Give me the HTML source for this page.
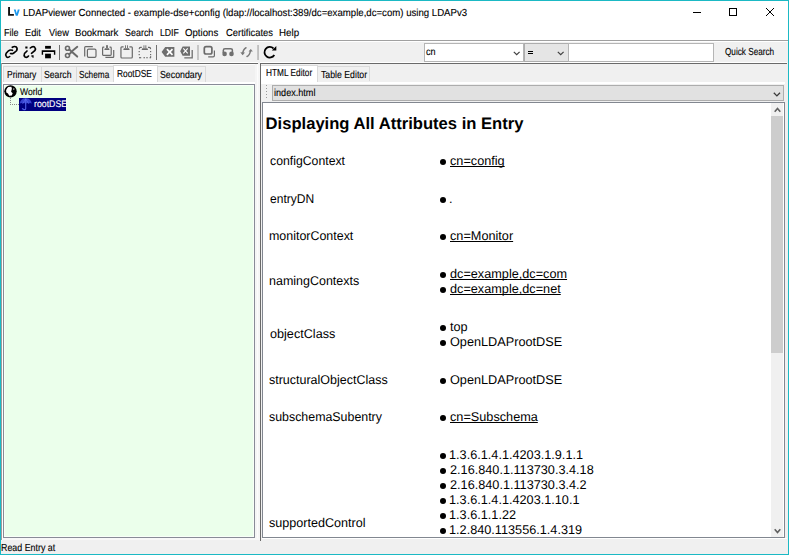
<!DOCTYPE html>
<html><head><meta charset="utf-8"><style>
html,body{margin:0;padding:0;width:789px;height:555px;overflow:hidden;background:#f0f0f0}
body{position:relative;font-family:"Liberation Sans",sans-serif}
.t{position:absolute;white-space:pre;font-family:"Liberation Sans",sans-serif;text-rendering:geometricPrecision}
</style></head><body>
<div style="position:absolute;left:1px;top:1px;width:787px;height:40px;background:#fff"></div>
<svg style="position:absolute;left:0;top:0" width="24" height="20"><path d="M8.1 7 H10 V14.1 H13.9 V15.8 H8.1Z" fill="#111"/><path d="M13.8 9.6 H15.7 L16.75 13.2 L17.8 9.6 H19.7 L17.7 15.8 H15.8Z" fill="#1c98ee"/></svg>
<div class="t" style="left:23.36px;top:9px;font-size:10.2px;line-height:10.2px;color:#000;-webkit-text-stroke:0.12px #000;transform:scaleX(0.9443);transform-origin:0 0;">LDAPviewer Connected - example-dse+config (ldap://localhost:389/dc=example,dc=com) using LDAPv3</div>
<div style="position:absolute;left:693px;top:12px;width:8px;height:1px;background:#000"></div>
<div style="position:absolute;left:729px;top:8px;width:8px;height:8px;border:1px solid #000;box-sizing:border-box"></div>
<svg style="position:absolute;left:0;top:0" width="789" height="20" shape-rendering="crispEdges"><g fill="#000"><rect x="766" y="8" width="1" height="1"/><rect x="773" y="8" width="1" height="1"/><rect x="767" y="9" width="1" height="1"/><rect x="772" y="9" width="1" height="1"/><rect x="768" y="10" width="1" height="1"/><rect x="771" y="10" width="1" height="1"/><rect x="769" y="11" width="1" height="1"/><rect x="770" y="11" width="1" height="1"/><rect x="770" y="12" width="1" height="1"/><rect x="769" y="12" width="1" height="1"/><rect x="771" y="13" width="1" height="1"/><rect x="768" y="13" width="1" height="1"/><rect x="772" y="14" width="1" height="1"/><rect x="767" y="14" width="1" height="1"/><rect x="773" y="15" width="1" height="1"/><rect x="766" y="15" width="1" height="1"/></g></svg>
<div class="t" style="left:3.61px;top:29px;font-size:10.2px;line-height:10.2px;color:#000;-webkit-text-stroke:0.12px #000;transform:scaleX(0.8867);transform-origin:0 0;">File</div>
<div class="t" style="left:24.89px;top:29px;font-size:10.2px;line-height:10.2px;color:#000;-webkit-text-stroke:0.12px #000;transform:scaleX(0.9059);transform-origin:0 0;">Edit</div>
<div class="t" style="left:48.70px;top:29px;font-size:10.2px;line-height:10.2px;color:#000;-webkit-text-stroke:0.12px #000;transform:scaleX(0.9045);transform-origin:0 0;">View</div>
<div class="t" style="left:74.56px;top:29px;font-size:10.2px;line-height:10.2px;color:#000;-webkit-text-stroke:0.12px #000;transform:scaleX(0.9444);transform-origin:0 0;">Bookmark</div>
<div class="t" style="left:124.92px;top:29px;font-size:10.2px;line-height:10.2px;color:#000;-webkit-text-stroke:0.12px #000;transform:scaleX(0.8774);transform-origin:0 0;">Search</div>
<div class="t" style="left:159.65px;top:29px;font-size:10.2px;line-height:10.2px;color:#000;-webkit-text-stroke:0.12px #000;transform:scaleX(0.8524);transform-origin:0 0;">LDIF</div>
<div class="t" style="left:184.90px;top:29px;font-size:10.2px;line-height:10.2px;color:#000;-webkit-text-stroke:0.12px #000;transform:scaleX(0.9457);transform-origin:0 0;">Options</div>
<div class="t" style="left:225.70px;top:29px;font-size:10.2px;line-height:10.2px;color:#000;-webkit-text-stroke:0.12px #000;transform:scaleX(0.9216);transform-origin:0 0;">Certificates</div>
<div class="t" style="left:278.84px;top:29px;font-size:10.2px;line-height:10.2px;color:#000;-webkit-text-stroke:0.12px #000;transform:scaleX(0.9600);transform-origin:0 0;">Help</div>
<div style="position:absolute;left:1px;top:40px;width:787px;height:1px;background:#a0a0a0"></div>
<div style="position:absolute;left:1px;top:41px;width:787px;height:1px;background:#fff"></div>
<div style="position:absolute;left:1px;top:62px;width:257px;height:1px;background:#fff"></div>
<div style="position:absolute;left:1px;top:63px;width:257px;height:1px;background:#6a6a6a"></div>
<div style="position:absolute;left:260px;top:62px;width:527px;height:1px;background:#fff"></div>
<div style="position:absolute;left:260px;top:63px;width:527px;height:1px;background:#6a6a6a"></div>
<svg style="position:absolute;left:0;top:0" width="290" height="64" viewBox="0 0 290 64">
<g fill="none" stroke="#000" stroke-width="1.65" stroke-linecap="round">
 <path d="M12.3 47.3 Q14.5 45.8 16.3 47 Q17.8 48.5 16.5 50.8 L13.5 53.2 Q12 54 10.5 53.5"/>
 <path d="M12.5 50.3 Q10 49.5 8.5 50.8 L6.2 53.2 Q5 55 6.5 56.8 Q8 58 9.7 56.5"/>
 <path d="M30.3 48 Q32.5 46 34.5 47 Q36 48.5 35 50.5 L31.5 53.3"/>
 <path d="M27 51 L24.5 53.5 Q23.5 55.5 25 57 Q27 58 28.5 56"/>
</g>
<path d="M25.3 46.6 h2.2 v2 h-2.2z M31.4 55.2 h2.2 v2.5 h-1.2 v-1 h-1z" fill="#000"/>
<g fill="#000">
 <rect x="45.1" y="45.9" width="5.8" height="2.8"/>
 <path d="M41.7 50.2 H55.3 V54.8 H53.9 V52 H43.1 V54.8 H41.7Z"/>
 <rect x="45.1" y="53.7" width="5.8" height="4.6"/>
</g>
<rect x="59" y="45" width="1" height="15" fill="#6e6e6e"/>
<g fill="none" stroke="#6a6a6a" stroke-width="1.6">
 <circle cx="67.5" cy="48.3" r="2"/>
 <circle cx="67.5" cy="55.5" r="2"/>
</g>
<g stroke="#6a6a6a" stroke-linecap="round">
 <path d="M69.3 49.6 L77.2 56.6" stroke-width="2"/>
 <path d="M69.2 54.2 L72 51.8" stroke-width="1.8"/>
 <path d="M72.8 50.6 L77.3 46.8" stroke-width="1.9"/>
</g>
<g fill="none" stroke="#6a6a6a" stroke-width="1.2">
 <path d="M84.7 56.6 V47.6 Q84.7 46.7 85.6 46.7 H92.8"/>
 <rect x="87.4" y="49.1" width="8.6" height="8.3" rx="1.3"/>
 <path d="M104.3 47.1 H103.3 Q102.6 47.1 102.6 47.9 V54.6 Q102.6 55.4 103.3 55.4 H110.4 Q111.2 55.4 111.2 54.6 V47.9 Q111.2 47.1 110.4 47.1 H109.5"/>
 <path d="M113.7 50 V56.7 Q113.7 57.4 113 57.4 H105.4"/>
 <path d="M123.6 46.8 H121.9 Q120.95 46.8 120.95 47.8 V57.1 Q120.95 58 121.9 58 H131.4 Q132.3 58 132.3 57.1 V47.8 Q132.3 46.8 131.4 46.8 H129.4"/>
</g>
<g fill="#6a6a6a">
 <path d="M104.9 48.3 H109 L109.6 50 H104.3Z"/><rect x="106" y="45.6" width="0.9" height="2.5"/><rect x="107.1" y="45.6" width="0.9" height="2.5"/><rect x="106" y="45.4" width="2" height="0.8"/>
 <path d="M123.9 48.3 H129 L129.7 50.1 H123.2Z"/><rect x="125.1" y="45.3" width="0.9" height="2.8"/><rect x="127" y="45.3" width="0.9" height="2.8"/>
 <path d="M142.3 48.3 H147.4 L148.1 50.1 H141.6Z"/><rect x="143.5" y="45.3" width="0.9" height="2.8"/><rect x="145.4" y="45.3" width="0.9" height="2.8"/>
 <path d="M138.6 49 Q138.6 46.7 140.6 46.7 h1.2 v1.2 h-1.2 q-0.8 0 -0.8 1 v0.3z"/>
 <path d="M151.2 49 Q151.2 46.7 149.2 46.7 h-1.2 v1.2 h1.2 q0.8 0 0.8 1 v0.3z"/>
 <rect x="138.6" y="51" width="1.2" height="1.2"/><rect x="138.6" y="54" width="1.2" height="1.2"/>
 <rect x="150" y="51" width="1.2" height="1.2"/><rect x="150" y="54" width="1.2" height="1.2"/>
 <rect x="139" y="57.1" width="2.2" height="1.2"/><rect x="143.5" y="57.1" width="1.4" height="1.2"/><rect x="146.3" y="57.1" width="1.4" height="1.2"/><rect x="149.6" y="57.1" width="1.4" height="1.2"/>
 <rect x="150" y="56.2" width="1.2" height="1.5"/>
</g>
<rect x="156" y="45" width="1" height="15" fill="#707070"/>
<path d="M161.6 51.9 L165.2 47.1 H174.4 V56.7 H165.2Z" fill="#6e6e6e"/>
<path d="M166.9 49.2 L172.5 54.8 M172.5 49.2 L166.9 54.8" stroke="#fff" stroke-width="1.7"/>
<path d="M180.2 51.2 L182.6 46.4 H190 V55.8 H182.6Z" fill="#6e6e6e"/>
<path d="M183.3 48.4 L187.7 53.4 M187.7 48.4 L183.3 53.4" stroke="#fff" stroke-width="1.1"/>
<path d="M192.2 50 V57.9 H184.3" fill="none" stroke="#6e6e6e" stroke-width="1.3"/>
<rect x="197.3" y="45" width="1.4" height="15" fill="#b4b4b4"/>
<rect x="204.3" y="46.7" width="7.6" height="7.3" rx="1.8" fill="none" stroke="#6a6a6a" stroke-width="1.7"/>
<path d="M214.4 50.4 V55.5 Q214.4 56.8 213.1 56.8 H208.2" fill="none" stroke="#6a6a6a" stroke-width="1.2"/>
<circle cx="224.6" cy="53.9" r="2.3" fill="#707070"/>
<circle cx="231.5" cy="53.9" r="2.3" fill="#707070"/>
<path d="M223.3 53 V50.5 Q223.3 48.8 225 48.8 H230.6 Q232.4 48.8 232.4 50.5 V53" fill="none" stroke="#707070" stroke-width="1.5"/>
<g fill="none" stroke="#7a7a7a" stroke-width="1.5" stroke-linecap="round">
 <path d="M246 47.8 Q243.5 49 242.6 53.5"/>
 <path d="M247 56.5 Q249.8 55.3 250.5 50.5"/>
</g>
<path d="M240.3 52.2 L242.6 55.3 L245 52.5Z" fill="#7a7a7a"/>
<path d="M248.5 51.6 L250.9 49 L252.8 51.5Z" fill="#7a7a7a"/>
<rect x="257.3" y="45" width="1.5" height="15" fill="#b4b4b4"/>
<path d="M273.5 48.5 A5.3 5.3 0 1 0 274.3 55" fill="none" stroke="#000" stroke-width="1.8"/>
<path d="M271.8 50.6 L276.3 50.6 L276.3 46.1Z" fill="#000"/>
</svg>
<div style="position:absolute;left:424px;top:43px;width:100px;height:19px;background:#fff;border:1px solid #b5b5b5;box-sizing:border-box"></div>
<div class="t" style="left:426.10px;top:48px;font-size:10.2px;line-height:10.2px;color:#000;-webkit-text-stroke:0.12px #000;transform:scaleX(0.8900);transform-origin:0 0;">cn</div>
<svg style="position:absolute;left:512.5px;top:50.8px" width="8" height="5" viewBox="0 0 8 5"><path d="M0.8 0.8 L3.7 3.7 L6.6 0.8" stroke="#404040" fill="none" stroke-width="1.2"/></svg>
<div style="position:absolute;left:524px;top:43px;width:45px;height:19px;background:#e5e5e5;border:1px solid #adadad;box-sizing:border-box"></div>
<div style="position:absolute;left:528px;top:51px;width:5px;height:1px;background:#000"></div>
<div style="position:absolute;left:528px;top:53px;width:5px;height:1px;background:#000"></div>
<svg style="position:absolute;left:556.5px;top:50.8px" width="8" height="5" viewBox="0 0 8 5"><path d="M0.8 0.8 L3.7 3.7 L6.6 0.8" stroke="#404040" fill="none" stroke-width="1.2"/></svg>
<div style="position:absolute;left:568px;top:43px;width:146px;height:19px;background:#fff;border:1px solid #b5b5b5;box-sizing:border-box"></div>
<div class="t" style="left:725.00px;top:48px;font-size:10.2px;line-height:10.2px;color:#000;-webkit-text-stroke:0.12px #000;transform:scaleX(0.8033);transform-origin:0 0;">Quick Search</div>
<div style="position:absolute;left:3px;top:66px;width:39px;height:16px;background:#f0f0f0;border:1px solid #dadada;border-bottom:none;box-sizing:border-box"></div>
<div class="t" style="left:6.76px;top:71px;font-size:10.2px;line-height:10.2px;color:#000;-webkit-text-stroke:0.12px #000;transform:scaleX(0.8353);transform-origin:0 0;">Primary</div>
<div style="position:absolute;left:41px;top:66px;width:36px;height:16px;background:#f0f0f0;border:1px solid #dadada;border-bottom:none;box-sizing:border-box"></div>
<div class="t" style="left:43.75px;top:71px;font-size:10.2px;line-height:10.2px;color:#000;-webkit-text-stroke:0.12px #000;transform:scaleX(0.8516);transform-origin:0 0;">Search</div>
<div style="position:absolute;left:76px;top:66px;width:39px;height:16px;background:#f0f0f0;border:1px solid #dadada;border-bottom:none;box-sizing:border-box"></div>
<div class="t" style="left:79.49px;top:71px;font-size:10.2px;line-height:10.2px;color:#000;-webkit-text-stroke:0.12px #000;transform:scaleX(0.8083);transform-origin:0 0;">Schema</div>
<div style="position:absolute;left:157px;top:66px;width:49px;height:16px;background:#f0f0f0;border:1px solid #dadada;border-bottom:none;box-sizing:border-box"></div>
<div class="t" style="left:159.94px;top:71px;font-size:10.2px;line-height:10.2px;color:#000;-webkit-text-stroke:0.12px #000;transform:scaleX(0.8625);transform-origin:0 0;">Secondary</div>
<div style="position:absolute;left:113px;top:65px;width:45px;height:20px;background:#fff;border:1px solid #d9d9d9;border-bottom:none;box-sizing:border-box"></div>
<div class="t" style="left:117.08px;top:70px;font-size:10.2px;line-height:10.2px;color:#000;-webkit-text-stroke:0.12px #000;transform:scaleX(0.8220);transform-origin:0 0;">RootDSE</div>
<div style="position:absolute;left:3px;top:82px;width:254px;height:2px;background:#fff"></div>
<div style="position:absolute;left:3px;top:84px;width:252px;height:454px;background:#ebffeb;border:1px solid #888b97;box-sizing:border-box;box-shadow:inset 0 0 0 1px #f8fff8"></div>
<div style="position:absolute;left:1px;top:63px;width:1px;height:477px;background:#a49a9a"></div>
<div style="position:absolute;left:2px;top:64px;width:1px;height:476px;background:#fff"></div>
<div style="position:absolute;left:2px;top:64px;width:255px;height:1px;background:#fcfcfc"></div>
<div style="position:absolute;left:255px;top:64px;width:2px;height:476px;background:#f5f5f5"></div>
<div style="position:absolute;left:257px;top:64px;width:1px;height:476px;background:#fcfcfc"></div>
<div style="position:absolute;left:258px;top:64px;width:2px;height:476px;background:#f6f6f6"></div>
<div style="position:absolute;left:3px;top:538px;width:257px;height:2px;background:#f8f8f8"></div>
<svg style="position:absolute;left:0;top:80px" width="40" height="32" viewBox="0 80 40 32"><circle cx="10.5" cy="91.35" r="6.2" fill="#000"/><path d="M8.3 86.9 L11.4 86.7 L11.9 88.8 L11.1 91.8 L12.7 93.3 L11.8 95.6 L9.2 95.7 L8 93.6 L6.3 92.6 L6.1 90.2 L7.1 88.2Z" fill="#fff"/><circle cx="13.8" cy="89.1" r="0.8" fill="#bbb"/><g fill="#8a8a8a"><rect x="10" y="98" width="1" height="1"/><rect x="10" y="100" width="1" height="1"/><rect x="10" y="102" width="1" height="1"/><rect x="10" y="104" width="1" height="1"/><rect x="12" y="104" width="1" height="1"/><rect x="14" y="104" width="1" height="1"/><rect x="16" y="104" width="1" height="1"/><rect x="18" y="104" width="1" height="1"/></g></svg>
<div class="t" style="left:19.80px;top:88px;font-size:9.8px;line-height:9.8px;color:#000;-webkit-text-stroke:0.12px #000;transform:scaleX(0.8720);transform-origin:0 0;">World</div>
<div style="position:absolute;left:19px;top:98px;width:47px;height:12.5px;background:#000080"></div>
<svg style="position:absolute;left:0;top:80px" width="40" height="32" viewBox="0 80 40 32"><path d="M19.8 103.6 Q20.5 98.3 25.7 98.2 Q31 98.3 31.7 103.6 Q30 102.6 28.6 103.6 Q27 102.6 25.7 103.6 Q24.3 102.6 22.8 103.6 Q21.4 102.6 19.8 103.6Z" fill="#3c4ad8" opacity="0.9"/><path d="M25.7 99 L22.8 103.5 M25.7 99 L28.6 103.5 M25.7 98.5 V103.5" stroke="#6070f0" stroke-width="0.7"/><path d="M25.7 103 V108.8 Q25.5 109.8 24 109.6 L22 108.6" stroke="#5060e8" stroke-width="1.1" fill="none"/></svg>
<div class="t" style="left:33.59px;top:100px;font-size:9.6px;line-height:9.6px;color:#fff;-webkit-text-stroke:0.12px #fff;transform:scaleX(0.9143);transform-origin:0 0;">rootDSE</div>
<div style="position:absolute;left:260px;top:63px;width:1px;height:478px;background:#6a6a6a"></div>
<div style="position:absolute;left:261px;top:65px;width:57px;height:19px;background:#fff;border:1px solid #dadada;border-bottom:none;border-left:none;box-sizing:border-box"></div>
<div class="t" style="left:266.09px;top:69px;font-size:10.2px;line-height:10.2px;color:#000;-webkit-text-stroke:0.12px #000;transform:scaleX(0.8127);transform-origin:0 0;">HTML Editor</div>
<div style="position:absolute;left:318px;top:66px;width:52px;height:15px;background:#f0f0f0;border:1px solid #dadada;border-bottom:none;border-left:none;box-sizing:border-box"></div>
<div class="t" style="left:320.90px;top:71px;font-size:10.2px;line-height:10.2px;color:#000;-webkit-text-stroke:0.12px #000;transform:scaleX(0.8566);transform-origin:0 0;">Table Editor</div>
<div style="position:absolute;left:261px;top:82px;width:524px;height:2px;background:#fff"></div>
<svg style="position:absolute;left:265px;top:85px" width="3" height="13"><g fill="#9a9a9a"><rect x="1" y="0" width="1" height="1"/><rect x="1" y="3" width="1" height="1"/><rect x="1" y="6" width="1" height="1"/><rect x="1" y="9" width="1" height="1"/><rect x="1" y="12" width="1" height="1"/></g></svg>
<div style="position:absolute;left:272px;top:85px;width:512px;height:16px;background:#e1e1e1;border:1px solid #adadad;box-sizing:border-box"></div>
<div class="t" style="left:273.91px;top:89px;font-size:10.2px;line-height:10.2px;color:#000;-webkit-text-stroke:0.12px #000;transform:scaleX(0.8933);transform-origin:0 0;">index.html</div>
<svg style="position:absolute;left:772.5px;top:91.5px" width="8" height="5" viewBox="0 0 8 5"><path d="M0.8 0.8 L3.9 3.9 L7 0.8" stroke="#3a3a3a" fill="none" stroke-width="1.3"/></svg>
<div style="position:absolute;left:262px;top:102px;width:523px;height:436px;background:#fff;border:1px solid #828790;box-sizing:border-box"></div>
<div style="position:absolute;left:262px;top:538px;width:525px;height:1px;background:#fff"></div>
<div style="position:absolute;left:771px;top:103px;width:12px;height:434px;background:#f0f0f0"></div>
<div style="position:absolute;left:771px;top:116px;width:12px;height:237px;background:#cdcdcd"></div>
<svg style="position:absolute;left:774px;top:107px" width="7" height="6" viewBox="0 0 7 6"><path d="M0.7 4.8 L3.5 1.5 L6.3 4.8" stroke="#606060" fill="none" stroke-width="1.6"/></svg>
<svg style="position:absolute;left:774px;top:528px" width="7" height="6" viewBox="0 0 7 6"><path d="M0.7 1.2 L3.5 4.5 L6.3 1.2" stroke="#606060" fill="none" stroke-width="1.6"/></svg>
<div class="t" style="left:265.60px;top:116px;font-size:16.6px;line-height:16.6px;color:#000;font-weight:bold">Displaying All Attributes in Entry</div>
<div class="t" style="left:270.20px;top:155px;font-size:12.7px;line-height:12.7px;color:#000;transform:scaleX(0.9667);transform-origin:0 0;">configContext</div>
<div class="t" style="left:270.20px;top:193px;font-size:12.7px;line-height:12.7px;color:#000;transform:scaleX(0.9500);transform-origin:0 0;">entryDN</div>
<div class="t" style="left:269.22px;top:230px;font-size:12.7px;line-height:12.7px;color:#000;transform:scaleX(0.9800);transform-origin:0 0;">monitorContext</div>
<div class="t" style="left:269.22px;top:275px;font-size:12.7px;line-height:12.7px;color:#000;transform:scaleX(0.9844);transform-origin:0 0;">namingContexts</div>
<div class="t" style="left:270.20px;top:328px;font-size:12.7px;line-height:12.7px;color:#000;transform:scaleX(0.9954);transform-origin:0 0;">objectClass</div>
<div class="t" style="left:269.22px;top:374px;font-size:12.7px;line-height:12.7px;color:#000;transform:scaleX(0.9840);transform-origin:0 0;">structuralObjectClass</div>
<div class="t" style="left:269.22px;top:411px;font-size:12.7px;line-height:12.7px;color:#000;transform:scaleX(0.9765);transform-origin:0 0;">subschemaSubentry</div>
<div class="t" style="left:269.21px;top:517px;font-size:12.7px;line-height:12.7px;color:#000;transform:scaleX(0.9927);transform-origin:0 0;">supportedControl</div>
<div style="position:absolute;left:439.5px;top:159px;width:6px;height:6px;border-radius:50%;background:#000"></div>
<div class="t" style="left:450.00px;top:155px;font-size:12.7px;line-height:12.7px;color:#000;text-decoration:underline;text-decoration-skip-ink:none">cn=config</div>
<div style="position:absolute;left:439.5px;top:197px;width:6px;height:6px;border-radius:50%;background:#000"></div>
<div class="t" style="left:449.00px;top:193px;font-size:12.7px;line-height:12.7px;color:#000;">.</div>
<div style="position:absolute;left:439.5px;top:234px;width:6px;height:6px;border-radius:50%;background:#000"></div>
<div class="t" style="left:450.00px;top:230px;font-size:12.7px;line-height:12.7px;color:#000;text-decoration:underline;text-decoration-skip-ink:none">cn=Monitor</div>
<div style="position:absolute;left:439.5px;top:272px;width:6px;height:6px;border-radius:50%;background:#000"></div>
<div class="t" style="left:450.00px;top:268px;font-size:12.7px;line-height:12.7px;color:#000;text-decoration:underline;text-decoration-skip-ink:none">dc=example,dc=com</div>
<div style="position:absolute;left:439.5px;top:287px;width:6px;height:6px;border-radius:50%;background:#000"></div>
<div class="t" style="left:450.00px;top:283px;font-size:12.7px;line-height:12.7px;color:#000;text-decoration:underline;text-decoration-skip-ink:none">dc=example,dc=net</div>
<div style="position:absolute;left:439.5px;top:325px;width:6px;height:6px;border-radius:50%;background:#000"></div>
<div class="t" style="left:450.00px;top:321px;font-size:12.7px;line-height:12.7px;color:#000;">top</div>
<div style="position:absolute;left:439.5px;top:340px;width:6px;height:6px;border-radius:50%;background:#000"></div>
<div class="t" style="left:450.00px;top:336px;font-size:12.7px;line-height:12.7px;color:#000;">OpenLDAProotDSE</div>
<div style="position:absolute;left:439.5px;top:378px;width:6px;height:6px;border-radius:50%;background:#000"></div>
<div class="t" style="left:450.00px;top:374px;font-size:12.7px;line-height:12.7px;color:#000;">OpenLDAProotDSE</div>
<div style="position:absolute;left:439.5px;top:415px;width:6px;height:6px;border-radius:50%;background:#000"></div>
<div class="t" style="left:450.00px;top:411px;font-size:12.7px;line-height:12.7px;color:#000;text-decoration:underline;text-decoration-skip-ink:none">cn=Subschema</div>
<div style="position:absolute;left:439.5px;top:453px;width:6px;height:6px;border-radius:50%;background:#000"></div>
<div class="t" style="left:449.00px;top:449px;font-size:12.7px;line-height:12.7px;color:#000;">1.3.6.1.4.1.4203.1.9.1.1</div>
<div style="position:absolute;left:439.5px;top:468px;width:6px;height:6px;border-radius:50%;background:#000"></div>
<div class="t" style="left:450.00px;top:464px;font-size:12.7px;line-height:12.7px;color:#000;">2.16.840.1.113730.3.4.18</div>
<div style="position:absolute;left:439.5px;top:483px;width:6px;height:6px;border-radius:50%;background:#000"></div>
<div class="t" style="left:450.00px;top:479px;font-size:12.7px;line-height:12.7px;color:#000;">2.16.840.1.113730.3.4.2</div>
<div style="position:absolute;left:439.5px;top:498px;width:6px;height:6px;border-radius:50%;background:#000"></div>
<div class="t" style="left:449.00px;top:494px;font-size:12.7px;line-height:12.7px;color:#000;">1.3.6.1.4.1.4203.1.10.1</div>
<div style="position:absolute;left:439.5px;top:513px;width:6px;height:6px;border-radius:50%;background:#000"></div>
<div class="t" style="left:449.00px;top:509px;font-size:12.7px;line-height:12.7px;color:#000;">1.3.6.1.1.22</div>
<div style="position:absolute;left:439.5px;top:528px;width:6px;height:6px;border-radius:50%;background:#000"></div>
<div class="t" style="left:449.00px;top:524px;font-size:12.7px;line-height:12.7px;color:#000;">1.2.840.113556.1.4.319</div>
<div class="t" style="left:0.63px;top:544px;font-size:10.2px;line-height:10.2px;color:#000;-webkit-text-stroke:0.12px #000;transform:scaleX(0.8705);transform-origin:0 0;">Read Entry at</div>
<div style="position:absolute;left:0;top:0;width:789px;height:1px;background:#1bb9c4"></div>
<div style="position:absolute;left:0;top:554px;width:789px;height:1px;background:#1bb9c4"></div>
<div style="position:absolute;left:0;top:0;width:1px;height:555px;background:#1bb9c4"></div>
<div style="position:absolute;left:788px;top:0;width:1px;height:555px;background:#1bb9c4"></div>
</body></html>
